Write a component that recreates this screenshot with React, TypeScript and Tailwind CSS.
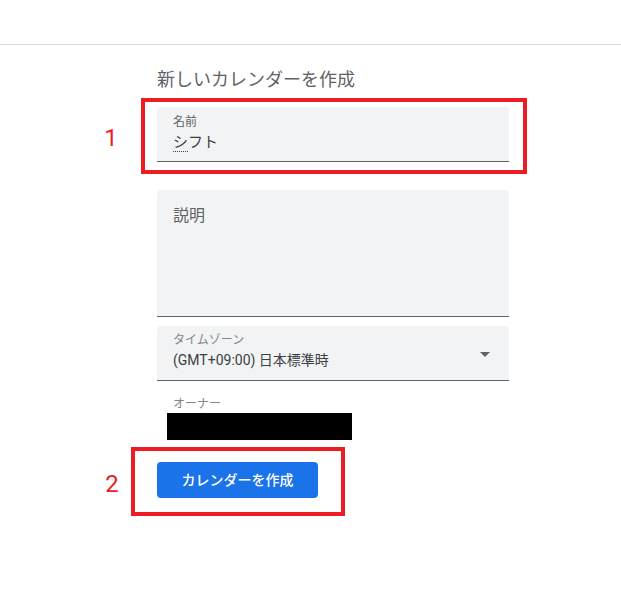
export default function App() {
  return (
    <div className="w-[621px] h-[601px] bg-white font-['Roboto','Noto_Sans_CJK_JP',sans-serif] text-[#3c4043]">
      {/* top bar */}
      <div className="h-[45px] border-b border-[#dadce0]" />

      <div className="ml-[157px] w-[352px] flex flex-col">
        <h1 className="mt-[23px] text-[18px] leading-[24px] text-[#5f6368]">新しいカレンダーを作成</h1>

        {/* name field with annotation 1 */}
        <div className="relative mt-[15px]">
          <div className="h-[55px] bg-[#f1f3f4] rounded-t-[4px] border-b border-[#5f6368] px-4 pt-[7px]">
            <div className="text-[12px] leading-[16px] text-[#5f6368]">名前</div>
            <div className="mt-[1px] text-[15px] leading-[22px] text-[#3c4043]">
              <span className="border-b border-dotted border-[#3c4043]">シ</span>フト
            </div>
          </div>
          <div className="absolute -left-[16px] -right-[18px] -top-[9px] -bottom-[12px] border-4 border-[#ec1c24] pointer-events-none" />
          <div className="absolute -left-[56px] top-[19px] w-[20px] h-[24px] flex items-center justify-center text-[24px] leading-none text-[#ec1c24]">1</div>
        </div>

        {/* description */}
        <div className="mt-[28px] h-[127px] bg-[#f1f3f4] rounded-t-[4px] border-b border-[#5f6368] px-4 pt-[15px]">
          <div className="text-[16px] leading-[22px] text-[#5f6368]">説明</div>
        </div>

        {/* timezone */}
        <div className="mt-[9px] h-[55px] bg-[#f1f3f4] rounded-t-[4px] border-b border-[#5f6368] pl-4 pr-[19px] pt-[6px] flex items-start justify-between">
          <div>
            <div className="text-[12px] leading-[16px] text-[#80868b]">タイムゾーン</div>
            <div className="mt-[1px] text-[14px] leading-[22px] text-[#3c4043]">(GMT+09:00) 日本標準時</div>
          </div>
          <svg width="10" height="5" viewBox="0 0 10 5" className="mt-[20px]">
            <path d="M0 0 L10 0 L5 5 Z" fill="#5f6368" />
          </svg>
        </div>

        {/* owner */}
        <div className="mt-[15px] pl-4 text-[12px] leading-[16px] text-[#80868b]">オーナー</div>
        <div className="ml-[10px] mt-[1px] w-[185px] h-[27px] bg-black" />

        {/* create button with annotation 2 */}
        <div className="relative mt-[22px] self-start">
          <button className="w-[161px] h-[36px] rounded-[4px] bg-[#1a73e8] text-white text-[14px] font-medium">
            カレンダーを作成
          </button>
          <div className="absolute -left-[26px] -right-[27px] -top-[15px] -bottom-[18px] border-4 border-[#ec1c24] pointer-events-none" />
          <div className="absolute -left-[55px] top-[10px] w-[20px] h-[24px] flex items-center justify-center text-[24px] leading-none text-[#ec1c24]">2</div>
        </div>
      </div>
    </div>
  );
}
